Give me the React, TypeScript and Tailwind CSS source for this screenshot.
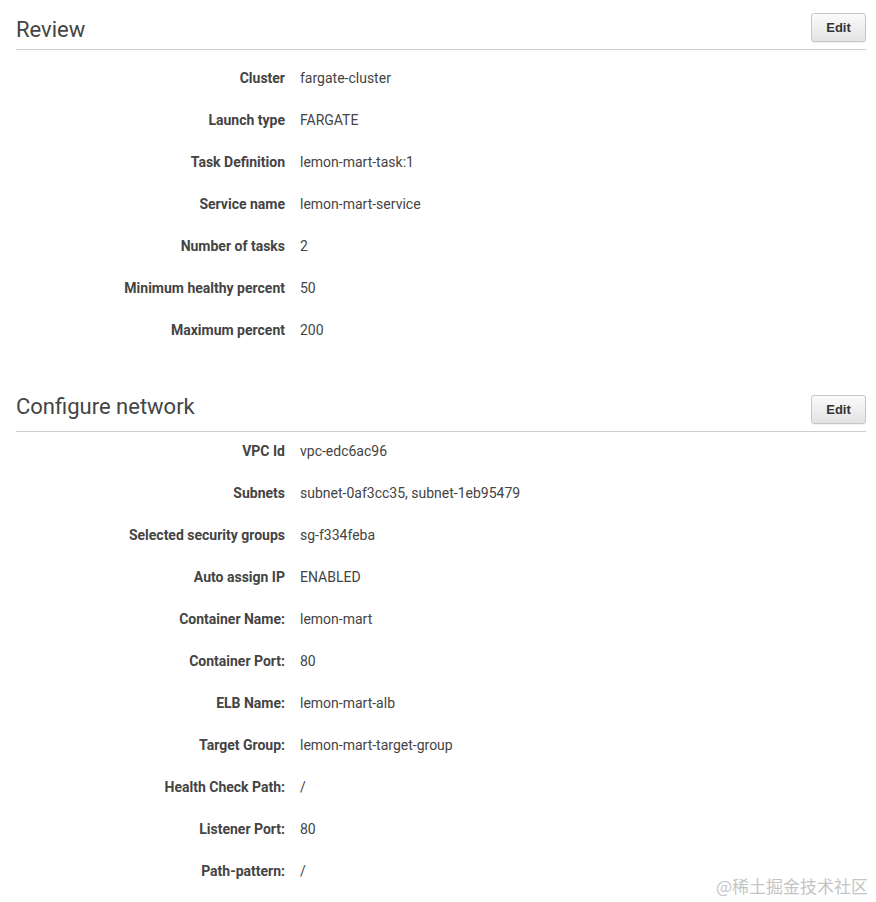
import React from "react";

type Row = { label: string; value: string };

const reviewRows: Row[] = [
  { label: "Cluster", value: "fargate-cluster" },
  { label: "Launch type", value: "FARGATE" },
  { label: "Task Definition", value: "lemon-mart-task:1" },
  { label: "Service name", value: "lemon-mart-service" },
  { label: "Number of tasks", value: "2" },
  { label: "Minimum healthy percent", value: "50" },
  { label: "Maximum percent", value: "200" },
];

const networkRows: Row[] = [
  { label: "VPC Id", value: "vpc-edc6ac96" },
  { label: "Subnets", value: "subnet-0af3cc35, subnet-1eb95479" },
  { label: "Selected security groups", value: "sg-f334feba" },
  { label: "Auto assign IP", value: "ENABLED" },
  { label: "Container Name:", value: "lemon-mart" },
  { label: "Container Port:", value: "80" },
  { label: "ELB Name:", value: "lemon-mart-alb" },
  { label: "Target Group:", value: "lemon-mart-target-group" },
  { label: "Health Check Path:", value: "/" },
  { label: "Listener Port:", value: "80" },
  { label: "Path-pattern:", value: "/" },
];

function SectionHeader({ title, titleClass }: { title: string; titleClass: string }) {
  return (
    <div className="flex items-start justify-between h-[50px] border-b border-[#cfcfcf]">
      <h2 className={`${titleClass} text-[22px] leading-[28px] font-normal text-[#444]`}>{title}</h2>
      <button className="mt-[13px] w-[55px] h-[29px] rounded-[3px] border border-[#c6c6c6] bg-gradient-to-b from-[#fbfbfb] to-[#e3e3e3] text-[13px] font-bold text-[#333] font-['Liberation_Sans',sans-serif] shadow-[0_1px_0_rgba(0,0,0,0.05)]">
        Edit
      </button>
    </div>
  );
}

function Rows({ rows }: { rows: Row[] }) {
  return (
    <div className="flex flex-col">
      {rows.map((r) => (
        <div key={r.label} className="flex items-center h-[42px] gap-[15px] text-[14px]">
          <span className="w-[269px] text-right font-bold text-[#444]">{r.label}</span>
          <span className="text-[#444]">{r.value}</span>
        </div>
      ))}
    </div>
  );
}

export default function App() {
  return (
    <div className="relative min-h-[902px] bg-white pl-4 pr-[10px] font-['Roboto',sans-serif]">
      <SectionHeader title="Review" titleClass="pt-[16px]" />
      <div className="pt-[7px]">
        <Rows rows={reviewRows} />
      </div>
      <div className="mt-[31px]">
        <SectionHeader title="Configure network" titleClass="pt-[11px]" />
        <div className="-mt-[2px]">
          <Rows rows={networkRows} />
        </div>
      </div>
      <div className="absolute right-[8px] bottom-[4px] text-[17px] text-[#c4c4c4] font-['Noto_Sans_CJK_SC',sans-serif]">
        @稀土掘金技术社区
      </div>
    </div>
  );
}
